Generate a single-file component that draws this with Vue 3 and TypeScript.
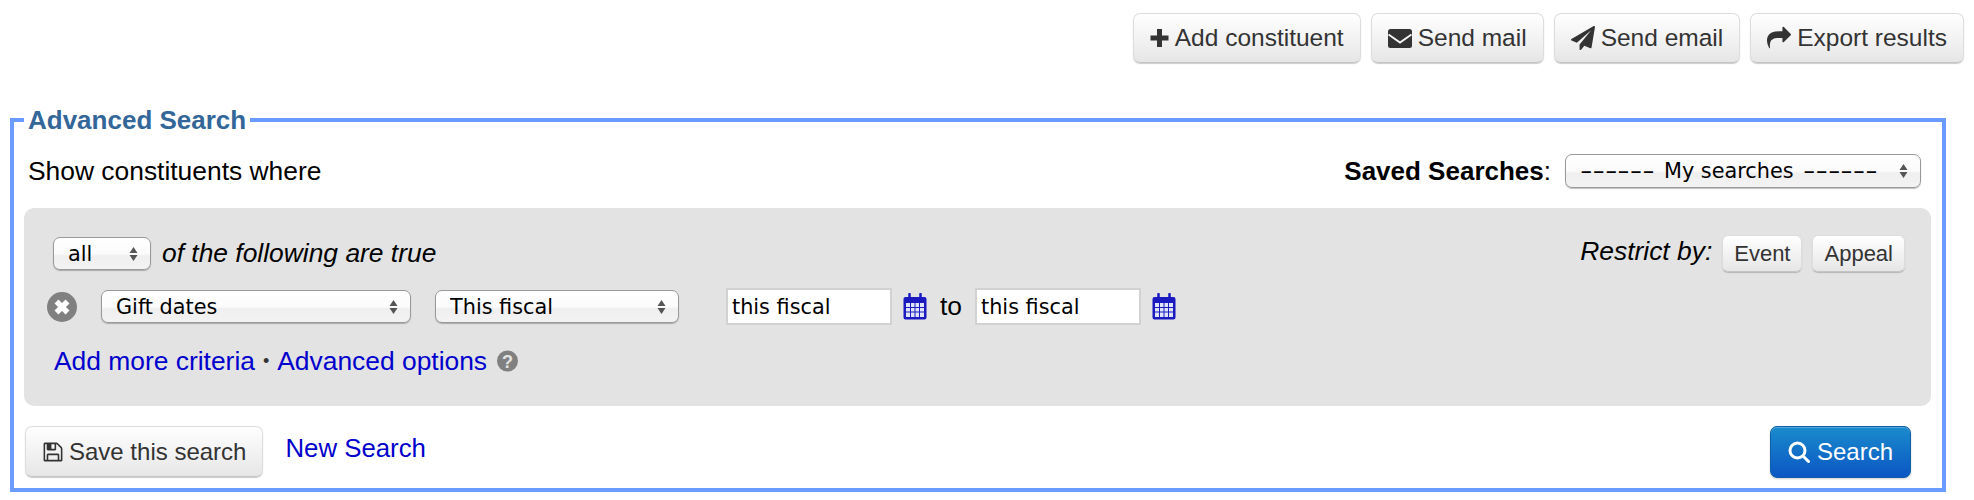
<template>
  <div class="page">
    <div class="toolbar">
      <button class="btn" type="button">
        <svg class="icon icon-plus" viewBox="0 0 18 18"><path d="M6.5 0h5v6.5H18v5h-6.5V18h-5v-6.5H0v-5h6.5z" /></svg>
        Add constituent
      </button>
      <button class="btn" type="button">
        <svg class="icon icon-mail" viewBox="0 0 24 19">
          <rect width="24" height="19" rx="2.5" />
          <path d="M0.5 5.5 12 13.5 23.5 5.5" class="mail-flap" />
        </svg>
        Send mail
      </button>
      <button class="btn" type="button">
        <svg class="icon icon-plane" viewBox="0 0 1792 1792"><path :d="planePath" /></svg>
        Send email
      </button>
      <button class="btn" type="button">
        <svg class="icon icon-share" viewBox="0 0 1792 1792"><path :d="sharePath" /></svg>
        Export results
      </button>
    </div>

    <fieldset class="search-box">
      <legend>Advanced Search</legend>
      <div class="intro-row">
        <span class="intro">Show constituents where</span>
        <div class="saved">
          <span class="saved-label"><b>Saved Searches</b>:</span>
          <div class="select-wrap saved-select">
            <div class="select-face">
              <span class="dashes">------</span>
              <span>My searches</span>
              <span class="dashes">------</span>
            </div>
            <svg class="arrows" viewBox="0 0 8 14"><path d="M4 0 8 6H0zM0 8h8l-4 6z" /></svg>
          </div>
        </div>
      </div>

      <div class="panel">
        <div class="match-row">
          <div class="match-left">
            <div class="select-wrap all-select">
              <select>
                <option>all</option>
              </select>
              <svg class="arrows" viewBox="0 0 8 14"><path d="M4 0 8 6H0zM0 8h8l-4 6z" /></svg>
            </div>
            <em>of the following are true</em>
          </div>
          <div class="restrict">
            <em>Restrict by:</em>
            <button class="btn btn-small" type="button">Event</button>
            <button class="btn btn-small" type="button">Appeal</button>
          </div>
        </div>

        <div class="criteria-row">
          <svg class="remove" viewBox="0 0 30 30">
            <circle cx="15" cy="15" r="15" />
            <path d="M9.500 9.500 20.500 20.500M20.500 9.500 9.500 20.500" />
          </svg>
          <div class="select-wrap field-select">
            <select>
              <option>Gift dates</option>
            </select>
            <svg class="arrows" viewBox="0 0 8 14"><path d="M4 0 8 6H0zM0 8h8l-4 6z" /></svg>
          </div>
          <div class="select-wrap range-select">
            <select>
              <option>This fiscal</option>
            </select>
            <svg class="arrows" viewBox="0 0 8 14"><path d="M4 0 8 6H0zM0 8h8l-4 6z" /></svg>
          </div>
          <input class="date-input first" value="this fiscal" />
          <svg class="calendar" viewBox="0 0 24 27">
            <path class="cal-body" d="M2.5 4h19A2 2 0 0 1 23.500 6v18.500a2 2 0 0 1-2 2h-19a2 2 0 0 1-2-2V6a2 2 0 0 1 2-2z" />
            <rect class="cal-paper" x="3" y="10" width="18" height="14" />
            <path class="cal-grid" d="M3 14.500h18M3 19h18M7.500 10v14M12 10v14M16.500 10v14" />
            <path class="cal-ring" d="M6.500 1v6M17.500 1v6" />
          </svg>
          <span class="to">to</span>
          <input class="date-input" value="this fiscal" />
          <svg class="calendar" viewBox="0 0 24 27">
            <path class="cal-body" d="M2.5 4h19A2 2 0 0 1 23.500 6v18.500a2 2 0 0 1-2 2h-19a2 2 0 0 1-2-2V6a2 2 0 0 1 2-2z" />
            <rect class="cal-paper" x="3" y="10" width="18" height="14" />
            <path class="cal-grid" d="M3 14.500h18M3 19h18M7.500 10v14M12 10v14M16.500 10v14" />
            <path class="cal-ring" d="M6.500 1v6M17.500 1v6" />
          </svg>
        </div>

        <div class="links-row">
          <a href="#">Add more criteria</a>
          <span class="dot">•</span>
          <a href="#">Advanced options</a>
          <svg class="help" viewBox="0 0 22 22">
            <circle cx="11" cy="11" r="11" />
            <text x="11" y="18" text-anchor="middle">?</text>
          </svg>
        </div>
      </div>

      <div class="actions">
        <button class="btn btn-save" type="button">
          <svg class="icon icon-save" viewBox="0 0 1792 1792"><path :d="savePath" /></svg>
          Save this search
        </button>
        <a href="#" class="new-search">New Search</a>
        <button class="btn-search" type="button">
          <svg class="icon-search" viewBox="0 0 22 22">
            <circle cx="9.500" cy="9.500" r="7.500" />
            <path d="M15 15 20.500 20.500" />
          </svg>
          Search
        </button>
      </div>
    </fieldset>
  </div>
</template>

<script setup lang="ts">
const planePath =
  'M1764 11q33 24 27 64l-256 1536q-5 29-32 45-14 8-31 8-11 0-24-5l-453-185-242 295q-18 23-49 23-13 0-22-4-19-7-30.5-23.5t-11.5-36.5v-349l864-1059-1069 925-395-162q-37-14-40-55-2-40 32-59l1664-960q15-9 32-9 20 0 36 11z'
const sharePath =
  'M1792 640q0 26-19 45l-512 512q-19 19-45 19t-45-19-19-45v-256h-224q-98 0-175.5 6t-154 21.5-133 42.5-105.5 69.5-80 101-48.5 138.5-17.5 181q0 55 5 123 0 6 2.5 23.5t2.5 26.5q0 15-8.5 25t-23.5 10q-16 0-28-17-7-9-13-22t-13.5-30-10.5-24q-127-285-127-451 0-199 53-333 162-403 875-403h224v-256q0-26 19-45t45-19 45 19l512 512q19 19 19 45z'
const savePath =
  'M512 1536h768v-384h-768v384zm896 0h128v-896q0-14-10-38.500t-20-34.500l-281-281q-10-10-34-20t-39-10v416q0 40-28 68t-68 28h-576q-40 0-68-28t-28-68v-416h-128v1280h128v-416q0-40 28-68t68-28h832q40 0 68 28t28 68v416zm-384-928v-320q0-13-9.500-22.500t-22.500-9.500h-192q-13 0-22.500 9.500t-9.500 22.500v320q0 13 9.500 22.500t22.500 9.500h192q13 0 22.500-9.500t9.500-22.500zm640 32v928q0 40-28 68t-68 28h-1344q-40 0-68-28t-28-68v-1344q0-40 28-68t68-28h928q40 0 88 20t76 48l280 280q28 28 48 76t20 88z'
</script>

<style>
html,
body {
  background: #fff;
}
</style>

<style scoped>
.page {
  width: 1974px;
  height: 500px;
  box-sizing: border-box;
  padding-top: 13px;
  overflow: hidden;
  font-family: "Liberation Sans", Arial, sans-serif;
  font-size: 26.4px;
  color: #000;
}

.toolbar {
  display: flex;
  justify-content: flex-end;
  gap: 10px;
  padding-right: 10px;
  height: 50px;
}

.btn {
  display: inline-flex;
  align-items: center;
  justify-content: center;
  gap: 6px;
  box-sizing: border-box;
  height: 50px;
  padding: 0 16px;
  border: 1px solid #ddd;
  border-bottom-color: #c4c4c4;
  border-radius: 7px;
  background: linear-gradient(#fff, #e6e6e6);
  box-shadow: 0 1px 1px rgba(0, 0, 0, 0.2);
  color: #333;
  font-family: inherit;
  font-size: 24.5px;
  white-space: nowrap;
}

.icon {
  fill: #333;
  flex: none;
}

.icon-plus {
  width: 19px;
  height: 18px;
}

.icon-mail {
  width: 24px;
  height: 19px;
}

.mail-flap {
  fill: none;
  stroke: #f4f4f4;
  stroke-width: 2;
}

.icon-plane {
  width: 24px;
  height: 24px;
}

.icon-share {
  width: 24px;
  height: 24px;
}

.search-box {
  margin: 43px 28px 0 10px;
  height: 386px;
  box-sizing: border-box;
  min-width: 0;
  padding: 0 11px 10px 10px;
  border: 4px solid #6c9bff;
}

legend {
  margin-left: 0;
  padding: 0 4px;
  color: #336699;
  font-size: 26px;
  font-weight: bold;
  line-height: 28px;
}

.intro-row {
  display: flex;
  justify-content: space-between;
  align-items: center;
  height: 34px;
  margin-top: 20px;
  padding: 0 10px 0 4px;
}

.saved {
  display: flex;
  align-items: center;
  gap: 14px;
  font-size: 26px;
}

.select-wrap {
  position: relative;
  display: inline-block;
  flex: none;
}

.select-wrap select,
.select-face {
  display: block;
  width: 100%;
  height: 100%;
  box-sizing: border-box;
  appearance: none;
  margin: 0;
  padding: 0 0 0 14px;
  border: 1px solid #999;
  border-radius: 7px;
  background: linear-gradient(#fff 0%, #fbfbfb 50%, #efefef 58%, #f3f3f3 100%);
  box-shadow: 0 1px 1px rgba(0, 0, 0, 0.25);
  color: #000;
  font-family: "DejaVu Sans", sans-serif;
  font-size: 20.800px;
}

.select-face {
  display: flex;
  align-items: center;
  gap: 9px;
}

.dashes {
  display: inline-block;
  width: 75px;
  transform: scaleX(1.66);
  transform-origin: left center;
}

.arrows {
  position: absolute;
  right: 13px;
  top: 50%;
  width: 9px;
  height: 14px;
  margin-top: -7px;
  fill: #555;
}

.saved-select {
  width: 356px;
  height: 34px;
}

.panel {
  box-sizing: border-box;
  height: 198px;
  margin-top: 20px;
  padding: 27px 26px 0 23px;
  border-radius: 10px;
  background: #e3e3e3;
}

.match-row {
  display: flex;
  justify-content: space-between;
  align-items: center;
  height: 37px;
  padding-left: 6px;
}

.match-left {
  display: flex;
  align-items: center;
  gap: 11px;
}

.all-select {
  width: 98px;
  height: 33px;
}

.restrict {
  display: flex;
  align-items: center;
  gap: 10px;
}

.restrict em {
  margin-bottom: 4px;
}

.btn-small {
  height: 37px;
  padding: 0 11px;
  font-size: 22px;
  border-radius: 6px;
}

.criteria-row {
  display: flex;
  align-items: center;
  height: 37px;
  margin-top: 16px;
}

.remove {
  width: 30px;
  height: 30px;
  margin-right: 24px;
  flex: none;
}

.remove circle {
  fill: #808080;
}

.remove path {
  fill: none;
  stroke: #fff;
  stroke-width: 5.5;
}

.field-select {
  width: 310px;
  height: 33px;
  margin-right: 24px;
}

.range-select {
  width: 244px;
  height: 33px;
  margin-right: 47px;
}

.date-input {
  box-sizing: border-box;
  width: 166px;
  height: 37px;
  padding: 0 4px;
  border: 2px solid #d2d2d2;
  background: #fff;
  color: #000;
  font-family: "DejaVu Sans", sans-serif;
  font-size: 20.800px;
}

.calendar {
  width: 24px;
  height: 27px;
  margin-left: 11px;
  flex: none;
}

.cal-body {
  fill: #1a1ac0;
}

.cal-paper {
  fill: #dfe4fa;
}

.cal-grid {
  fill: none;
  stroke: #1a1ac0;
  stroke-width: 1;
}

.cal-ring {
  fill: none;
  stroke: #1a1ac0;
  stroke-width: 2.5;
  stroke-linecap: round;
}

.to {
  margin: 0 13px;
}

.links-row {
  display: flex;
  align-items: center;
  height: 24px;
  margin-top: 24px;
  padding-left: 7px;
}

a {
  color: #0000cc;
  text-decoration: none;
}

.dot {
  margin: 0 8px;
  color: #333;
  font-size: 18px;
}

.help {
  width: 21px;
  height: 22px;
  margin-left: 10px;
}

.help circle {
  fill: #808080;
}

.help text {
  fill: #e3e3e3;
  font-family: "Liberation Sans", Arial, sans-serif;
  font-size: 19px;
  font-weight: bold;
}

.actions {
  display: flex;
  align-items: flex-start;
  margin-top: 20px;
  padding: 0 20px 0 1px;
}

.btn-save {
  height: 51px;
  gap: 5px;
  padding: 0 16px;
  font-size: 24px;
}

.icon-save {
  width: 22px;
  height: 22px;
}

.new-search {
  margin-left: 22px;
  font-size: 25.800px;
  line-height: 44px;
}

.btn-search {
  display: inline-flex;
  align-items: center;
  justify-content: center;
  gap: 7px;
  box-sizing: border-box;
  width: 141px;
  height: 52px;
  margin-left: auto;
  padding: 0;
  border: 1px solid #0e5fa6;
  border-radius: 7px;
  background: linear-gradient(#1a8bcc, #0b56c4);
  box-shadow: inset 0 1px 0 rgba(255, 255, 255, 0.25), 0 1px 2px rgba(0, 0, 0, 0.2);
  color: #fff;
  font-family: inherit;
  font-size: 24px;
}

.icon-search {
  width: 22px;
  height: 22px;
  fill: none;
  stroke: #fff;
  stroke-width: 3;
  stroke-linecap: round;
}
</style>
